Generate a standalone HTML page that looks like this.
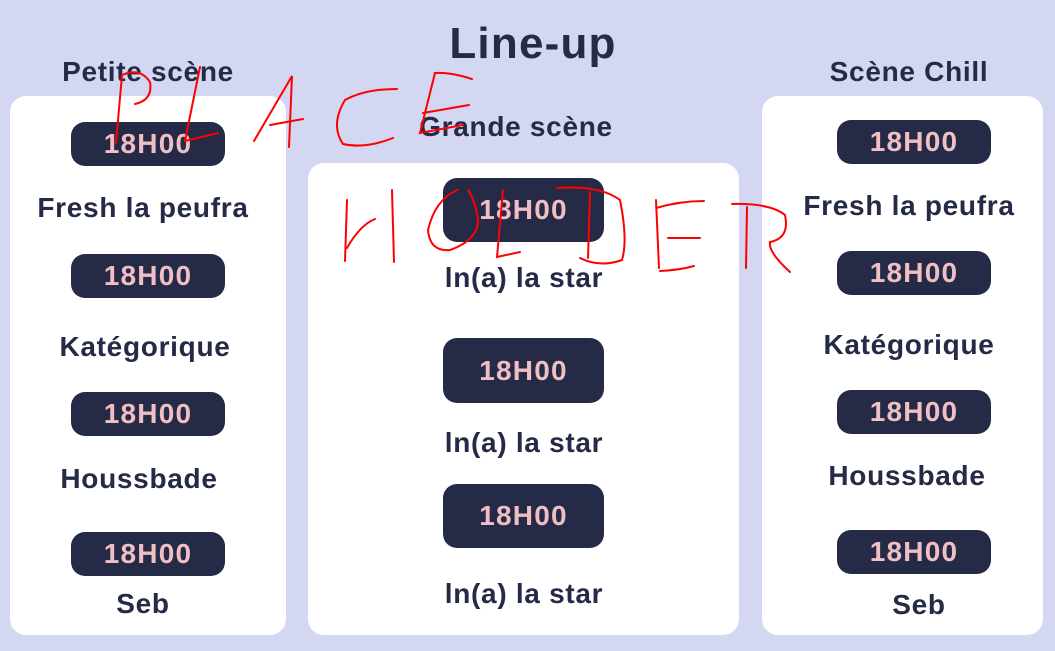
<!DOCTYPE html>
<html><head><meta charset="utf-8"><style>
*{margin:0;padding:0;box-sizing:border-box}
body{width:1055px;height:651px;background:#d4d7f1;position:relative;overflow:hidden;font-family:"Liberation Sans",sans-serif;font-weight:bold;color:#252a47}
.card{position:absolute;background:#fff;border-radius:16px}
.t{position:absolute;width:400px;text-align:center;height:30px;line-height:30px;font-size:28px;letter-spacing:0.7px}
.p{position:absolute;background:#252a47;color:#f0bfc4;text-align:center;font-size:28px;letter-spacing:1.2px;border-radius:14px}
</style></head><body>
<div class="t" style="left:333px;top:22px;height:44px;line-height:44px;font-size:44px;letter-spacing:1.2px">Line-up</div>
<div class="t" style="left:-52px;top:57px">Petite scène</div>
<div class="t" style="left:316px;top:112px">Grande scène</div>
<div class="t" style="left:709px;top:57px">Scène Chill</div>

<div class="card" style="left:10px;top:96px;width:276px;height:539px"></div>
<div class="card" style="left:308px;top:163px;width:431px;height:472px"></div>
<div class="card" style="left:762px;top:96px;width:281px;height:539px"></div>

<div class="p" style="left:71px;top:122px;width:154px;height:44px;line-height:44px">18H00</div>
<div class="p" style="left:71px;top:254px;width:154px;height:44px;line-height:44px">18H00</div>
<div class="p" style="left:71px;top:392px;width:154px;height:44px;line-height:44px">18H00</div>
<div class="p" style="left:71px;top:532px;width:154px;height:44px;line-height:44px">18H00</div>
<div class="t" style="left:-57px;top:193px">Fresh la peufra</div>
<div class="t" style="left:-55px;top:332px">Katégorique</div>
<div class="t" style="left:-61px;top:464px">Houssbade</div>
<div class="t" style="left:-57px;top:589px">Seb</div>

<div class="p" style="left:443px;top:178px;width:161px;height:64px;line-height:64px">18H00</div>
<div class="p" style="left:443px;top:338px;width:161px;height:65px;line-height:65px">18H00</div>
<div class="p" style="left:443px;top:484px;width:161px;height:64px;line-height:64px">18H00</div>
<div class="t" style="left:324px;top:263px">ln(a) la star</div>
<div class="t" style="left:324px;top:428px">ln(a) la star</div>
<div class="t" style="left:324px;top:579px">ln(a) la star</div>

<div class="p" style="left:837px;top:120px;width:154px;height:44px;line-height:44px">18H00</div>
<div class="p" style="left:837px;top:251px;width:154px;height:44px;line-height:44px">18H00</div>
<div class="p" style="left:837px;top:390px;width:154px;height:44px;line-height:44px">18H00</div>
<div class="p" style="left:837px;top:530px;width:154px;height:44px;line-height:44px">18H00</div>
<div class="t" style="left:709px;top:191px">Fresh la peufra</div>
<div class="t" style="left:709px;top:330px">Katégorique</div>
<div class="t" style="left:707px;top:461px">Houssbade</div>
<div class="t" style="left:719px;top:590px">Seb</div>

<svg style="position:absolute;left:0;top:0" width="1055" height="651" fill="none" stroke="#f00" stroke-width="2" stroke-linecap="round">
<path d="M116 143 L122 75 Q140 67 150 82 Q153 100 135 104"/>
<path d="M200 67 L185 141 L218 133"/>
<path d="M254 141 L292 76 L289 147 M270 125 L303 119"/>
<path d="M397 89 Q365 89 345 100 Q330 125 343 144 Q365 149 393 138"/>
<path d="M472 79 Q450 72 435 73 L420 133 L463 125 M423 113 L469 105"/>
<path d="M345 261 L347 200 M347 248 Q360 225 375 219 M392 190 L394 262"/>
<path d="M457 190 Q435 200 428 230 Q430 252 450 250 Q478 240 478 220 Q475 200 468 190"/>
<path d="M503 190 L497 257 L520 252"/>
<path d="M557 188 Q600 185 620 200 Q628 240 622 260 Q600 268 580 258 M590 192 L588 258"/>
<path d="M656 200 L659 268 M656 208 Q680 201 704 201 M668 238 L700 238 M660 271 Q680 270 694 266"/>
<path d="M732 204 Q770 203 785 215 Q790 238 770 242 L770 242 Q768 252 790 272 M747 207 L746 268"/>
</svg>
</body></html>
